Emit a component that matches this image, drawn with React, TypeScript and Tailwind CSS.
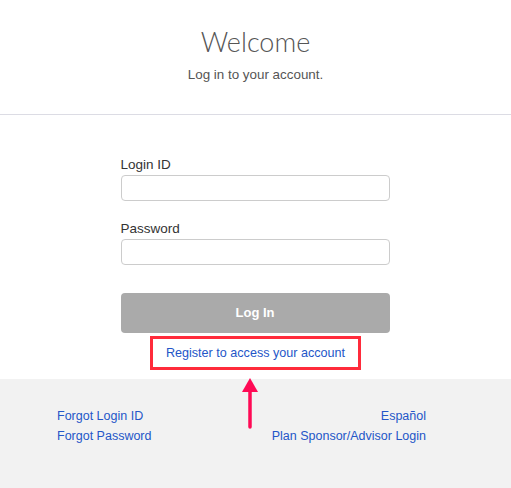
export default function App() {
  return (
    <div className="relative w-[511px] h-[488px] bg-white flex flex-col font-['Liberation_Sans',Arial,sans-serif] overflow-hidden">
      <div className="h-[115px] border-b border-[#dcdce4] flex flex-col items-center">
        <h1 className="mt-[24px] text-[27px] leading-[36px] font-light text-[#555] font-['Lato',sans-serif]">
          Welcome
        </h1>
        <p className="mt-[6px] text-[13.4px] leading-[18px] text-[#555]">
          Log in to your account.
        </p>
      </div>

      <form className="w-[270px] mx-auto flex flex-col">
        <label className="mt-[41px] text-[13.5px] leading-[18px] text-[#333]">Login ID</label>
        <input
          type="text"
          className="mt-[1px] h-[26px] w-[269px] border border-[#ccc] rounded-[4px] bg-white"
        />
        <label className="mt-[19px] text-[13.5px] leading-[18px] text-[#333]">Password</label>
        <input
          type="password"
          className="mt-[1px] h-[26px] w-[269px] border border-[#ccc] rounded-[4px] bg-white"
        />
        <button
          type="button"
          className="mt-[28px] h-[40px] w-[269px] rounded-[4px] bg-[#aaa] text-white text-[13px] font-bold"
        >
          Log In
        </button>
      </form>

      <div className="mt-[3px] mx-auto w-[211px] h-[34px] border-[3px] border-[#ff2b3b] flex items-center justify-center">
        <a className="text-[12.6px] text-[#2456c8]">Register to access your account</a>
      </div>

      <div className="mt-[9px] flex-1 bg-[#f2f2f2] flex justify-between pl-[57px] pr-[85px] pt-[27px]">
        <div className="flex flex-col text-[12.5px] leading-[20px] text-[#2456c8]">
          <a>Forgot Login ID</a>
          <a>Forgot Password</a>
        </div>
        <div className="flex flex-col items-end text-[12.5px] leading-[20px] text-[#2456c8]">
          <a>Español</a>
          <a>Plan Sponsor/Advisor Login</a>
        </div>
      </div>

      <svg
        className="absolute left-[240px] top-[377px]"
        width="20"
        height="52"
        viewBox="0 0 20 52"
      >
        <path d="M10 1 L2 15 L18 15 Z" fill="#ff0a55" />
        <line x1="10" y1="12" x2="10" y2="50" stroke="#ff0a55" strokeWidth="3.5" strokeLinecap="round" />
      </svg>
    </div>
  );
}
